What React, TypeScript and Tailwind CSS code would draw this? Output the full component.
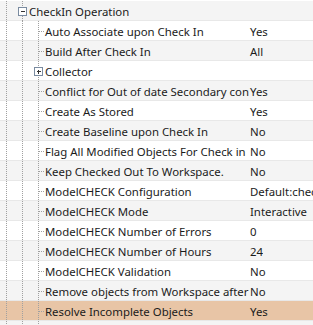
const rows: { name: string; value?: string; kind?: 'group' | 'collapsed'; selected?: boolean }[] = [
  { name: 'CheckIn Operation', kind: 'group' },
  { name: 'Auto Associate upon Check In', value: 'Yes' },
  { name: 'Build After Check In', value: 'All' },
  { name: 'Collector', kind: 'collapsed' },
  { name: 'Conflict for Out of date Secondary content', value: 'Yes' },
  { name: 'Create As Stored', value: 'Yes' },
  { name: 'Create Baseline upon Check In', value: 'No' },
  { name: 'Flag All Modified Objects For Check in', value: 'No' },
  { name: 'Keep Checked Out To Workspace.', value: 'No' },
  { name: 'ModelCHECK Configuration', value: 'Default:checks' },
  { name: 'ModelCHECK Mode', value: 'Interactive' },
  { name: 'ModelCHECK Number of Errors', value: '0' },
  { name: 'ModelCHECK Number of Hours', value: '24' },
  { name: 'ModelCHECK Validation', value: 'No' },
  { name: 'Remove objects from Workspace after Check In', value: 'No' },
  { name: 'Resolve Incomplete Objects', value: 'Yes', selected: true },
  { name: '', value: '' },
]

const dot = { stroke: '#a0a0a0', strokeWidth: 1, strokeDasharray: '1 1' }

function Guides({ kind, child }: { kind?: 'group' | 'collapsed'; child: boolean }) {
  return (
    <svg width="45" height="20" className="shrink-0" shapeRendering="crispEdges">
      <line x1="6.5" y1="0" x2="6.5" y2="20" {...dot} />
      <line x1="22.5" y1={kind === 'group' ? 15 : 0} x2="22.5" y2="20" {...dot} />
      {kind === 'group' && (
        <>
          <line x1="22.5" y1="0" x2="22.5" y2="6" {...dot} />
          <rect x="18.5" y="6.5" width="8" height="8" fill="#fff" stroke="#7a8ba0" />
          <line x1="20.5" y1="10.5" x2="24.5" y2="10.5" stroke="#333" />
        </>
      )}
      {child && (
        <>
          <line x1="38.5" y1="0" x2="38.5" y2="20" {...dot} />
          {kind === 'collapsed' ? (
            <>
              <rect x="34.5" y="6.5" width="8" height="8" fill="#fff" stroke="#7a8ba0" />
              <line x1="36.5" y1="10.5" x2="40.5" y2="10.5" stroke="#333" />
              <line x1="38.5" y1="8.5" x2="38.5" y2="12.5" stroke="#333" />
            </>
          ) : (
            <line x1="39" y1="10.5" x2="45" y2="10.5" {...dot} />
          )}
        </>
      )}
    </svg>
  )
}

export default function App() {
  return (
    <div
      className="w-[313px] h-[325px] overflow-hidden bg-white pt-px text-[11.4px] text-[#1b1b1b]"
      style={{ fontFamily: '"Segoe UI", "Noto Sans", "Open Sans", sans-serif' }}
    >
      {rows.map((r, i) => {
        const bg = r.selected ? 'bg-[#e8c5a6]' : i % 2 === 0 ? 'bg-[#f4f4f4]' : 'bg-white'
        return (
          <div key={i} className={`flex h-[20px] items-center border-b border-[#e8e8e8] ${bg}`}>
            <div className="flex w-[249px] shrink-0 items-center overflow-hidden">
              <Guides kind={r.kind} child={i > 0} />
              <span
                className={`whitespace-nowrap pt-px leading-[19px] ${r.kind === 'group' ? '-ml-[16px]' : ''}`}
              >
                {r.name}
              </span>
            </div>
            <div className="min-w-0 overflow-hidden whitespace-nowrap pl-[1px] pt-px leading-[19px]">{r.value}</div>
          </div>
        )
      })}
    </div>
  )
}
